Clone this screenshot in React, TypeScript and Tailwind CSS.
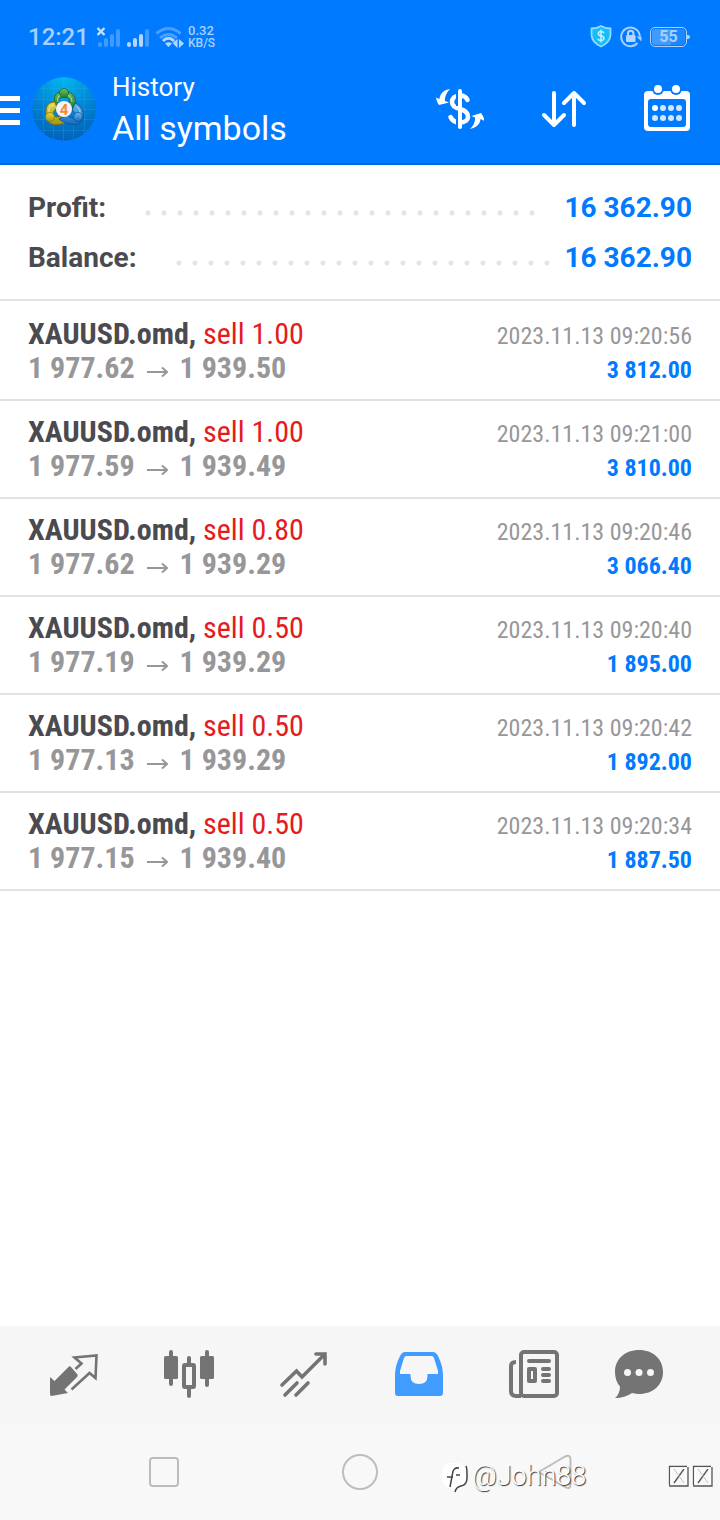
import type { ReactNode } from "react";

type Deal = { volume: string; open: string; close: string; time: string; profit: string };

const deals: Deal[] = [
  { volume: "1.00", open: "1 977.62", close: "1 939.50", time: "2023.11.13 09:20:56", profit: "3 812.00" },
  { volume: "1.00", open: "1 977.59", close: "1 939.49", time: "2023.11.13 09:21:00", profit: "3 810.00" },
  { volume: "0.80", open: "1 977.62", close: "1 939.29", time: "2023.11.13 09:20:46", profit: "3 066.40" },
  { volume: "0.50", open: "1 977.19", close: "1 939.29", time: "2023.11.13 09:20:40", profit: "1 895.00" },
  { volume: "0.50", open: "1 977.13", close: "1 939.29", time: "2023.11.13 09:20:42", profit: "1 892.00" },
  { volume: "0.50", open: "1 977.15", close: "1 939.40", time: "2023.11.13 09:20:34", profit: "1 887.50" },
];

function StatusBar() {
  return (
    <div className="flex h-[72px] items-center justify-between pl-7 pr-[30px] pt-[2px] text-[#a9d0ff]">
      <div className="flex items-center">
        <span className="w-[66px] text-[24px] font-medium leading-6">12:21</span>
        <svg className="h-6 w-[90px]" viewBox="94 24 90 24" fill="none" aria-hidden="true">
          <path d="M97.500 27l7 7m0-7l-7 7" stroke="#c5e0ff" strokeWidth="2.400" />
          <g stroke="#3f9bff" strokeWidth="4" strokeLinecap="round">
            <path d="M100 43v1M106 39v5M112 35v9M118 30v14" />
            <path d="M147 30v14" />
          </g>
          <path d="M129 43v1M135 39v5M141 35v9" stroke="#b5d7ff" strokeWidth="4" strokeLinecap="round" />
          <path d="M156.500 32.500Q168.500 22.500 180.500 32.500M160 37Q168.500 30 177 37" stroke="#4b9fff" strokeWidth="3" />
          <path d="M163 40Q168.500 34.500 174 40" stroke="#b5d7ff" strokeWidth="3" />
          <path d="M165 42.500Q168.500 40 172 42.500L168.500 46Z" fill="#b5d7ff" />
          <path d="M177.500 38v9l-5-5zM179 47V38l5 4.500z" fill="#b5d7ff" />
        </svg>
        <span className="flex flex-col pl-1 text-[13px] font-medium leading-[13px]">
          <span>0.32</span>
          <span className="text-[12px]">KB/S</span>
        </span>
      </div>
      <div className="flex items-center gap-2">
        <svg className="h-6 w-[22px]" viewBox="0 0 22 24" aria-hidden="true">
          <path d="M11 1Q15 3.500 20.500 3.500V10Q20 17.500 11 21.500Q2 17.500 1.500 10V3.500Q7 3.500 11 1Z" fill="#16bdfb" stroke="#8fdcff" strokeWidth="1.800" />
          <path d="M14 8Q13 6.500 11 6.500Q8.300 6.500 8.300 8.700Q8.300 10.300 11 10.800Q13.900 11.400 13.900 13.300Q13.700 15.500 11 15.500Q8.600 15.500 7.800 13.700M11 4.500v13" fill="none" stroke="#c9efff" strokeWidth="1.500" />
        </svg>
        <svg className="h-6 w-[22px]" viewBox="0 0 22 24" fill="none" aria-hidden="true">
          <path d="M17.500 18A9.300 9.300 0 1 1 19.800 11.500" stroke="#a9d0ff" strokeWidth="2" />
          <path d="M16.500 11.500h5v5z" fill="#a9d0ff" />
          <path d="M8 11V8.500a2.700 2.700 0 0 1 5.400 0V11" stroke="#b5d7ff" strokeWidth="2" />
          <rect x="6" y="10" width="9.500" height="7" rx="1" fill="#b5d7ff" />
        </svg>
        <div className="flex items-center">
          <div className="flex h-5 w-[37px] items-center justify-center rounded-[5px] border border-[#a9d0ff] bg-[linear-gradient(90deg,#3f9bff_56%,#1c88ff_56%)] bg-clip-content p-px text-[16px] font-bold leading-4">
            55
          </div>
          <div className="h-1 w-[3px] rounded-r bg-[#a9d0ff]" />
        </div>
      </div>
    </div>
  );
}

function AppLogo() {
  return (
    <svg className="ml-3 size-16 shrink-0" viewBox="0 0 64 64" role="img" aria-label="Account">
      <defs>
        <radialGradient id="sky" cx="50%" cy="0%" r="100%">
          <stop offset="0" stopColor="#05b7ee" />
          <stop offset="0.600" stopColor="#0080d2" />
          <stop offset="1" stopColor="#0063b8" />
        </radialGradient>
        <linearGradient id="green" x2="0" y2="1"><stop stopColor="#6dc06a" /><stop offset="1" stopColor="#26802f" /></linearGradient>
        <linearGradient id="gold" x2="0" y2="1"><stop stopColor="#e6da45" /><stop offset="1" stopColor="#a59512" /></linearGradient>
        <linearGradient id="azure" x2="0" y2="1"><stop stopColor="#63bdf3" /><stop offset="1" stopColor="#1469bd" /></linearGradient>
        <clipPath id="disc"><circle cx="32" cy="32" r="32" /></clipPath>
      </defs>
      <g clipPath="url(#disc)">
        <circle cx="32" cy="32" r="32" fill="url(#sky)" />
        <path d="M11.500 0v64M21.500 0v64M31.500 0v64M41.500 0v64M52.500 0v64M0 11.500h64M0 22.500h64M0 32.500h64M0 42.500h64M0 53.500h64" stroke="#55b9ee" strokeOpacity="0.180" />
      </g>
      <g strokeLinejoin="round">
        <path d="M24 28C19 20 25 14 32 14S46 20 43 30L37 30C39 23 37 20 32 20S25 24 26 29Z" fill="url(#green)" stroke="#1f6a2c" strokeWidth="1" />
        <path d="M23 25C13 25 13 34 15 43C19 50 29 48 35 45L29 39C21 43 19 34 25 31Z" fill="url(#gold)" stroke="#796e16" strokeWidth="1" />
        <path d="M43 26C51 29 53 38 50 44C44 50 35 48 27 42L35 38C43 45 46 38 40 33Z" fill="url(#azure)" stroke="#125596" strokeWidth="1" />
        <path d="M26 25Q24 17.500 32 17.500T40 25M22 28Q15 29 17.500 36M45 30Q49 33 48 37" fill="none" stroke="#ecf8da" strokeOpacity="0.700" />
        <circle cx="32" cy="16" r="4.500" fill="url(#green)" stroke="#1d6b2b" strokeWidth="0.800" />
        <circle cx="18" cy="40" r="4.500" fill="url(#gold)" stroke="#8b7d0c" strokeWidth="0.800" />
        <circle cx="46" cy="40" r="4.500" fill="url(#azure)" stroke="#0e559c" strokeWidth="0.800" />
      </g>
      <circle cx="32" cy="32" r="8" fill="#f2f3f5" />
      <text x="32" y="37.500" textAnchor="middle" fontSize="15" fontWeight="700" fill="#f58a32" className="font-['Roboto',sans-serif]">4</text>
    </svg>
  );
}

function Header() {
  return (
    <header className="border-b-2 border-[#0067dc] bg-[#007aff] text-white">
      <StatusBar />
      <div className="flex h-[91px] items-start pr-7">
        <button aria-label="Open menu" className="mt-6 flex w-5 flex-col gap-[7px]">
          <span className="h-[5px] w-full bg-white" />
          <span className="h-[5px] w-full bg-white" />
          <span className="h-[5px] w-full bg-white" />
        </button>
        <div className="mt-[5px]"><AppLogo /></div>
        <div className="ml-4 flex-1">
          <p className="text-[26px] leading-[30px]">History</p>
          <h1 className="mt-1 text-[34px] leading-[44px]">All symbols</h1>
        </div>
        <div className="mt-3 flex">
          <button aria-label="Filter by symbol" className="mr-[55px]">
            <svg className="h-[50px] w-[50px]" viewBox="434 84 50 50" fill="none" aria-hidden="true">
              <path d="M467.500 100C466 96.500 463 95.500 460 95.500C454.500 95.500 452 98.500 452 102C452 106 455 107.700 460 109C465.500 110.500 468 112.500 468 116.500C468 120.500 464.500 122.500 460 122.500C455.500 122.500 452 120.500 450.500 117" stroke="white" strokeWidth="4.500" strokeLinecap="round" />
              <path d="M457 92v14M457 112v13" stroke="#007aff" strokeWidth="2" />
              <path d="M460 91v36" stroke="white" strokeWidth="4" strokeLinecap="round" />
              <path d="M450 89C443 90 440 94 439.500 99L436 97.500C436.500 101 437.500 103 439 105L449 102.500L445 101C444.500 96.500 447 92 450 89Z" fill="white" />
              <path d="M470 129C477 127.500 480 124 480.500 119L484.500 121C484 117.500 482.500 115 481 113L471.500 116L475 117.500C475.500 122 473.500 126 470 129Z" fill="white" />
            </svg>
          </button>
          <button aria-label="Sort" className="mr-[55px]">
            <svg className="h-[50px] w-[48px]" viewBox="539 84 48 50" fill="none" stroke="white" strokeWidth="4" strokeLinecap="round" strokeLinejoin="round" aria-hidden="true">
              <path d="M554 93v32M544 115l10 10 10-10M574 125V93M564 103l10-10 10 10" />
            </svg>
          </button>
          <button aria-label="Select period">
            <svg className="h-[50px] w-[50px]" viewBox="642 84 50 50" aria-hidden="true">
              <rect x="644" y="91" width="46" height="40" rx="4" fill="white" />
              <circle cx="658" cy="89" r="6" fill="#007aff" />
              <circle cx="676" cy="89" r="6" fill="#007aff" />
              <circle cx="658" cy="89" r="4" fill="white" />
              <circle cx="676" cy="89" r="4" fill="white" />
              <rect x="648" y="99" width="38" height="28" rx="3" fill="#007aff" />
              <g fill="#d3e7ff">
                <circle cx="655" cy="108" r="3" fill="white" /><circle cx="663" cy="108" r="3" /><circle cx="671" cy="108" r="3" /><circle cx="679" cy="108" r="3" />
                <circle cx="655" cy="118" r="3" /><circle cx="663" cy="118" r="3" /><circle cx="671" cy="118" r="3" /><circle cx="679" cy="118" r="3" />
              </g>
            </svg>
          </button>
        </div>
      </div>
    </header>
  );
}

function SummaryRow({ label, value, leader }: { label: string; value: string; leader: string }) {
  return (
    <div className="flex h-[50px] items-center text-[28px] font-bold leading-8">
      <dt className="text-[#4a4a50]">{label}</dt>
      <span aria-hidden="true" className={`mt-[9px] h-[6px] flex-1 bg-[radial-gradient(circle,#e4e4e5_2px,transparent_3px)] bg-[length:16px_6px] bg-repeat-x ${leader}`} />
      <dd className="text-[#007aff]">{value}</dd>
    </div>
  );
}

function DealRow({ deal }: { deal: Deal }) {
  return (
    <li className="flex h-[98px] justify-between border-b-2 border-[#e2e2e3] px-7 pt-[14px] font-['Roboto_Condensed','Roboto',sans-serif]">
      <div className="text-[30px] leading-[34px]">
        <p className="text-[#e51b1e]">
          <span className="font-bold text-[#4a4a50]">XAUUSD.omd,</span> sell {deal.volume}
        </p>
        <p className="flex items-center font-bold text-[#97979a]">
          {deal.open}
          <svg className="ml-3 mr-3 mt-2 h-3 w-[21px]" viewBox="0 0 21 12" fill="none" stroke="currentColor" strokeWidth="2" role="img" aria-label="to">
            <path d="M0 6h20M15 1.500l5 4.500-5 4.500" />
          </svg>
          {deal.close}
        </p>
      </div>
      <div className="pt-[2px] text-right text-[24px] leading-[34px]">
        <p className="text-[#97979a]">{deal.time}</p>
        <p className="font-bold text-[#007aff]">{deal.profit}</p>
      </div>
    </li>
  );
}

function Tab({ label, active, last, children }: { label: string; active?: boolean; last?: boolean; children: ReactNode }) {
  return (
    <button
      aria-label={label}
      aria-current={active ? "page" : undefined}
      className={`flex justify-center ${last ? "flex-[5]" : "flex-[6]"} ${active ? "text-[#409cff]" : "text-[#747474]"}`}
    >
      <svg className="h-[52px] w-[52px]" viewBox="0 0 52 52" fill="none" stroke="currentColor" aria-hidden="true">{children}</svg>
    </button>
  );
}

function TabBar() {
  return (
    <nav aria-label="Sections" className="flex h-[98px] items-start bg-[#f6f6f6] pl-[17px] pr-[33px] pt-[22px]">
      <Tab label="Quotes">
        <path d="M20 19.500Q21.500 17.500 23 19L29.500 26.500Q30 28 29 29L16.500 41.500L20 45L3.500 48Q2 48 2 46V29L6.500 33Z" fill="currentColor" stroke="none" />
        <path d="M27.500 21L33.500 15.500L26.500 9.500L48.500 7.500L47.500 30L41.500 25L23.500 41.500" strokeWidth="2.600" />
      </Tab>
      <Tab label="Charts">
        <path d="M8 4v32M44 4v33M26 10v38" strokeWidth="4" strokeLinecap="round" />
        <rect x="1" y="8" width="14" height="23" rx="1.500" fill="currentColor" stroke="none" />
        <rect x="37" y="8" width="14" height="23" rx="1.500" fill="currentColor" stroke="none" />
        <rect x="21" y="17" width="10" height="22" rx="1" fill="#f6f6f6" strokeWidth="4" />
      </Tab>
      <Tab label="Trade">
        <path d="M4 37L18.500 23L24 29L47 6M38 6h9v10M7 47l12-12M18 47l12-12" strokeWidth="3.600" strokeLinecap="round" />
      </Tab>
      <Tab label="History" active>
        <path d="M12 4H40Q43 4 45 8Q50 18 50 27V45Q50 48 47 48H5Q2 48 2 45V27Q2 18 7 8Q9 4 12 4ZM13 8Q12 8 11 10L7 23V26H17.500V28Q17.500 36 26 36T34.500 28V26H45V23L41 10Q40 8 39 8Z" fill="currentColor" fillRule="evenodd" stroke="none" />
      </Tab>
      <Tab label="News">
        <rect x="13" y="4" width="36" height="44" rx="3" strokeWidth="4" />
        <path d="M8 14Q3 14 3 18V43Q3 48 8 48H13" strokeWidth="4" />
        <path d="M21 13h20M35 21h6M35 27h6M35 33h6" strokeWidth="4" strokeLinecap="round" />
        <rect x="21" y="21" width="6" height="12" strokeWidth="4" strokeLinejoin="round" />
      </Tab>
      <Tab label="Messages" last>
        <path d="M26 2C40 2 50 11 50 24S40 46 26 46Q23 46 19 45Q12 50 2 50Q7 46 7 38.500Q2 33 2 24C2 11 12 2 26 2Z" fill="currentColor" stroke="none" />
        <g fill="#f6f6f6" stroke="none"><circle cx="14.500" cy="24.500" r="3.500" /><circle cx="26" cy="24.500" r="3.500" /><circle cx="37.500" cy="24.500" r="3.500" /></g>
      </Tab>
    </nav>
  );
}

function SystemNav() {
  return (
    <div className="relative flex h-24 items-center justify-around bg-[#f8f8f8] px-[66px] text-[#bdbdbd]">
      <button aria-label="Recent apps"><svg className="size-9" viewBox="0 0 36 36" fill="none" stroke="currentColor" strokeWidth="2"><rect x="4" y="4" width="28" height="28" rx="3" /></svg></button>
      <button aria-label="Home"><svg className="size-9" viewBox="0 0 36 36" fill="none" stroke="currentColor" strokeWidth="2"><circle cx="18" cy="18" r="17" /></svg></button>
      <button aria-label="Back"><svg className="size-9" viewBox="0 0 36 36" fill="none" stroke="currentColor" strokeWidth="2" strokeLinejoin="round"><path d="M2.500 17L27 2.500Q32 0 32.500 5V31Q32 36 27 33L2.500 19Q1.500 18 2.500 17Z" /></svg></button>
      <div className="absolute bottom-[26px] right-[6px] flex w-[272px] items-center justify-between">
        <span className="flex items-center text-[27px] leading-9 text-white [text-shadow:1px_1px_1px_#333]">
          <svg className="mr-1 mt-1 h-[30px] w-[26px]" viewBox="0 0 26 30" fill="none" aria-hidden="true">
            <path d="M24 3Q25 5 25 11V15Q25 22 19 23Q14 24 13 29" stroke="#444" strokeWidth="1.500" />
            <path d="M8 0H16Q24 1 24 10V14Q24 21 18 22Q13 24 12 28L11 25H8Q0 23 0 14V9Q0 1 8 0Z" fill="white" />
            <path d="M17 5Q11 4 10.500 11L8 24M5 14h6M14 12h4" stroke="#444" strokeWidth="1.500" />
          </svg>
          <span className="font-['Roboto',sans-serif] font-light">@John88</span>
        </span>
        <svg className="h-[22px] w-[46px]" viewBox="0 0 46 22" fill="none" aria-hidden="true">
          <path d="M1.500 20V1.500H19M25.500 20V1.500H43M6 18L16 4M30 18L40 4M1 21H20V2M25 21H44V2" stroke="#555" strokeWidth="1.300" />
          <path d="M3 19V3H18V19M27 19V3H42V19" stroke="white" strokeWidth="1.300" />
          <path d="M6 4L16 18M30 4L40 18" stroke="#c4c4c4" strokeWidth="1" />
        </svg>
      </div>
    </div>
  );
}

export default function App() {
  return (
    <div className="flex min-h-screen flex-col bg-white font-['Roboto',sans-serif]">
      <Header />
      <main className="flex-1">
        <dl className="border-b-2 border-[#e2e2e3] px-7 pb-4 pt-[18px]">
          <SummaryRow label="Profit:" value="16 362.90" leader="ml-[34px] mr-[27px]" />
          <SummaryRow label="Balance:" value="16 362.90" leader="ml-[34px] mr-3" />
        </dl>
        <ul className="pt-[2px]">
          {deals.map((deal) => <DealRow key={deal.time} deal={deal} />)}
        </ul>
      </main>
      <TabBar />
      <SystemNav />
    </div>
  );
}
